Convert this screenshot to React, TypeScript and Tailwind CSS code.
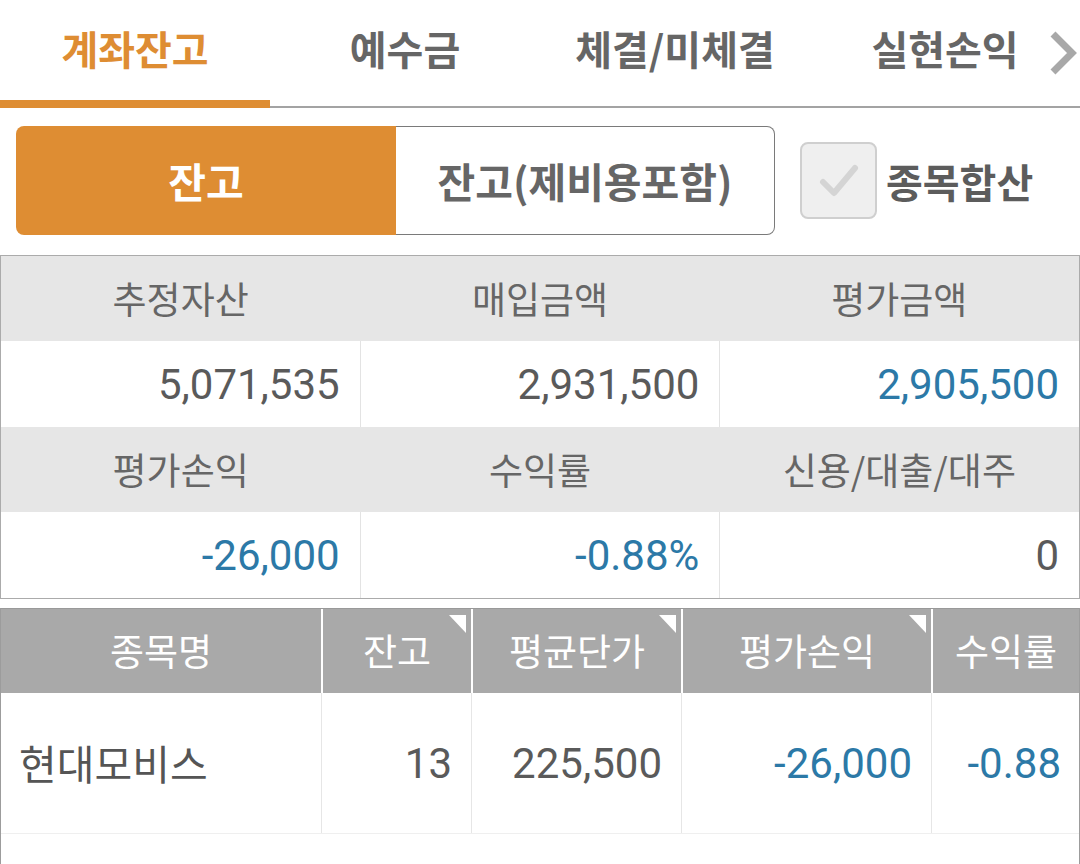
import React from "react";

const KR = "font-['Noto_Sans_CJK_KR',sans-serif]";
const NUM = "font-['Roboto','Noto_Sans_CJK_KR',sans-serif]";

const tabs = ["계좌잔고", "예수금", "체결/미체결", "실현손익"];

function Corner() {
  return (
    <svg className="absolute right-[5px] top-[6px]" width="17" height="18" viewBox="0 0 17 18">
      <polygon points="0,0 17,0 17,18" fill="#ffffff" />
    </svg>
  );
}

export default function App() {
  const summary = [
    [
      { label: "추정자산", value: "5,071,535", blue: false },
      { label: "매입금액", value: "2,931,500", blue: false },
      { label: "평가금액", value: "2,905,500", blue: true },
    ],
    [
      { label: "평가손익", value: "-26,000", blue: true },
      { label: "수익률", value: "-0.88%", blue: true },
      { label: "신용/대출/대주", value: "0", blue: false },
    ],
  ];

  const cols = [
    { label: "종목명", w: "w-[320px]", corner: false },
    { label: "잔고", w: "w-[150px]", corner: true },
    { label: "평균단가", w: "w-[210px]", corner: true },
    { label: "평가손익", w: "w-[250px]", corner: true },
    { label: "수익률", w: "flex-1", corner: false },
  ];

  return (
    <div className={`w-[1080px] h-[864px] overflow-hidden bg-white ${KR}`}>
      {/* Tabs */}
      <div className="relative flex h-[108px] border-b-2 border-[#a3a3a3]">
        {tabs.map((t, i) => (
          <div key={t} className="w-[270px] relative flex items-center justify-center pb-[10px]">
            <span
              className={`text-[40px] font-bold leading-none ${
                i === 0 ? "text-[#de8d33]" : "text-[#666666]"
              }`}
            >
              {t}
            </span>
            {i === 0 && <div className="absolute left-0 right-0 bottom-[-2px] h-[8px] bg-[#de8d33]" />}
          </div>
        ))}
        <svg className="absolute right-[2px] top-[30px]" width="30" height="46" viewBox="0 0 30 46">
          <polyline points="5,4 24,23 5,42" fill="none" stroke="#a8a8a8" strokeWidth="7" />
        </svg>
      </div>

      {/* Segment + checkbox */}
      <div className="flex items-center mt-[18px] pl-[16px]">
        <div className="flex h-[109px] w-[759px]">
          <div className="w-[380px] bg-[#de8d33] rounded-l-[8px] flex items-center justify-center">
            <span className="text-[41px] font-bold text-white">잔고</span>
          </div>
          <div className="flex-1 border border-[#7a7a7a] border-l-0 rounded-r-[8px] flex items-center justify-center">
            <span className="text-[41px] font-bold text-[#666666]">잔고(제비용포함)</span>
          </div>
        </div>
        <div className="ml-[25px] w-[77px] h-[77px] rounded-[8px] border-2 border-[#cfcfcf] bg-[#efefef] flex items-center justify-center">
          <svg width="40" height="34" viewBox="0 0 40 34">
            <polyline points="4,18 15,29 36,4" fill="none" stroke="#d4d4d4" strokeWidth="6" strokeLinecap="round" strokeLinejoin="round" />
          </svg>
        </div>
        <span className="ml-[9px] text-[40px] font-bold text-[#5c5c5c]">종목합산</span>
      </div>

      {/* Summary */}
      <div className="mt-[20px] border border-[#ababab]">
        {summary.map((row, r) => (
          <div key={r}>
            <div className="flex h-[85px] bg-[#e6e6e6]">
              {row.map((c) => (
                <div key={c.label} className="flex-1 flex items-center justify-center">
                  <span className="text-[37px] text-[#666666]">{c.label}</span>
                </div>
              ))}
            </div>
            <div className="flex h-[86px] bg-white">
              {row.map((c, i) => (
                <div
                  key={c.label}
                  className={`flex-1 flex items-center justify-end pr-[20px] ${i > 0 ? "border-l border-[#e3e3e3]" : ""}`}
                >
                  <span className={`${NUM} text-[42px] ${c.blue ? "text-[#2c79a7]" : "text-[#5a5a5a]"}`}>
                    {c.value}
                  </span>
                </div>
              ))}
            </div>
          </div>
        ))}
      </div>

      {/* Holdings */}
      <div className="mt-[9px] border-x border-[#9c9c9c] h-[300px]">
        <div className="flex h-[85px] bg-[#a9a9a9] border-t border-[#999999]">
          {cols.map((c, i) => (
            <div
              key={c.label}
              className={`${c.w} relative flex items-center justify-center ${i > 0 ? "border-l-2 border-white" : ""}`}
            >
              <span className="text-[37px] text-white">{c.label}</span>
              {c.corner && <Corner />}
            </div>
          ))}
        </div>
        <div className="flex h-[141px] border-b border-[#efefef]">
          <div className="w-[320px] flex items-center pl-[18px]">
            <span className="text-[41px] text-[#555555]">현대모비스</span>
          </div>
          <div className="w-[150px] border-l border-[#e6e6e6] flex items-center justify-end pr-[19px]">
            <span className={`${NUM} text-[42px] text-[#5a5a5a]`}>13</span>
          </div>
          <div className="w-[210px] border-l border-[#e6e6e6] flex items-center justify-end pr-[19px]">
            <span className={`${NUM} text-[42px] text-[#5a5a5a]`}>225,500</span>
          </div>
          <div className="w-[250px] border-l border-[#e6e6e6] flex items-center justify-end pr-[19px]">
            <span className={`${NUM} text-[42px] text-[#2c79a7]`}>-26,000</span>
          </div>
          <div className="flex-1 border-l border-[#e6e6e6] flex items-center justify-end pr-[18px]">
            <span className={`${NUM} text-[42px] text-[#2c79a7]`}>-0.88</span>
          </div>
        </div>
      </div>
    </div>
  );
}
